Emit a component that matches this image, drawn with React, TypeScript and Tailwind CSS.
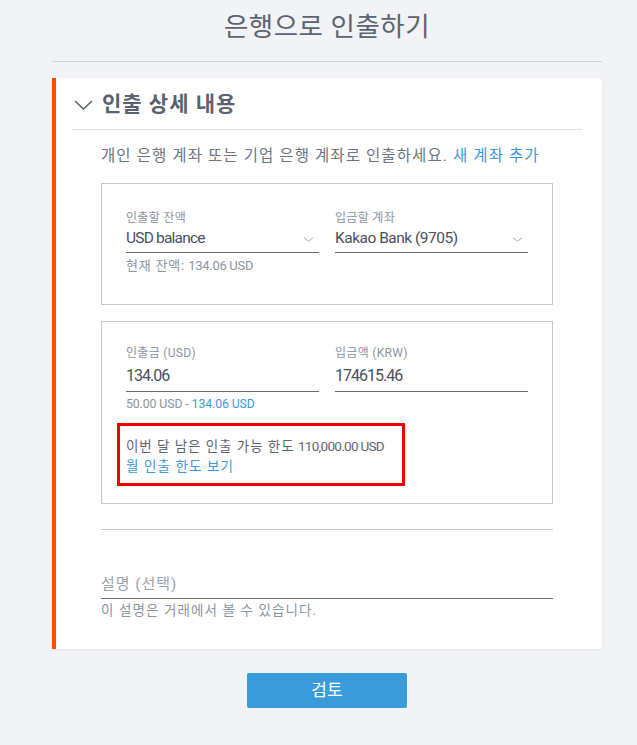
import React from "react";

const font = { fontFamily: "Roboto, 'Noto Sans CJK KR', sans-serif" };

function HeaderChevron() {
  return (
    <svg viewBox="0 0 19 10" className="h-[10px] w-[19px] text-[#5f6773]" fill="none" stroke="currentColor" strokeWidth="1.6">
      <path d="M1 1 L9.5 9 L18 1" />
    </svg>
  );
}

function SmallChevron() {
  return (
    <svg viewBox="0 0 11 5" className="h-[5px] w-[11px] text-[#a7adb6]" fill="none" stroke="currentColor" strokeWidth="1">
      <path d="M1 0.8 L5.5 4.2 L10 0.8" />
    </svg>
  );
}

function Label({ children }: { children: React.ReactNode }) {
  return <div className="h-4 text-[12px] leading-4 tracking-[0.3px] text-[#8c95a2]">{children}</div>;
}

function Input({ label, value }: { label: string; value: string }) {
  return (
    <div className="flex flex-col">
      <Label>{label}</Label>
      <div className="flex h-[31px] items-center border-b border-[#6a6f77]">
        <span className="text-[16px] tracking-[-1px] text-[#4a515c]">{value}</span>
      </div>
    </div>
  );
}

export default function App() {
  return (
    <div style={font} className="min-h-[745px] w-full bg-[#f1f3f7] pb-[37px]">
      <div className="ml-[52px] w-[550px]">
        <div className="flex h-[61px] items-center justify-center pb-[10px] pt-[2px] text-[26.5px] tracking-[0.5px] text-[#5c6470]">
          은행으로 인출하기
        </div>
        <div className="h-px bg-[#cfd2d8]" />
        <div className="mt-4 flex rounded-r-[3px] bg-white shadow-[0_1px_3px_rgba(0,0,0,0.08)]">
          <div className="w-1 shrink-0 bg-[#ff4a00]" />
          <div className="flex-1 pl-4 pr-5">
            <div className="flex h-[52px] items-center gap-[9px] border-b border-[#dfe2e7] pl-[2px] pt-[2px]">
              <HeaderChevron />
              <span className="text-[21px] font-bold tracking-[1px] text-[#5a6270]">인출 상세 내용</span>
            </div>
            <div className="px-[29px]">
              <div className="flex h-[53px] items-center pt-[1px] text-[15.5px] tracking-[1.1px] text-[#6d7581]">
                <span>
                  개인 은행 계좌 또는 기업 은행 계좌로 인출하세요.{" "}
                  <span className="text-[#3c9ad9]">새 계좌 추가</span>
                </span>
              </div>
              <div className="border border-[#c4c8cf] px-6 pb-[30px] pt-[26px]">
                <div className="grid grid-cols-2 gap-4">
                  <div className="flex flex-col">
                    <Label>인출할 잔액</Label>
                    <div className="flex h-[27px] items-center justify-between border-b border-[#6a6f77] pr-[5px]">
                      <span className="text-[15.5px] tracking-[-0.8px] text-[#4a515c]">USD balance</span>
                      <SmallChevron />
                    </div>
                    <div className="mt-[5px] h-4 text-[13px] leading-4 text-[#8c95a2]">
                      <span className="tracking-[0.8px]">현재 잔액:</span>{" "}
                      <span className="tracking-[-0.3px]">134.06 USD</span>
                    </div>
                  </div>
                  <div className="flex flex-col">
                    <Label>입금할 계좌</Label>
                    <div className="flex h-[27px] items-center justify-between border-b border-[#6a6f77] pr-[5px]">
                      <span className="text-[15.5px] tracking-[-0.5px] text-[#4a515c]">Kakao Bank (9705)</span>
                      <SmallChevron />
                    </div>
                  </div>
                </div>
              </div>
              <div className="mt-[16px] border border-[#c4c8cf] px-6 pb-[17px] pt-[23px]">
                <div className="grid grid-cols-2 gap-4">
                  <Input label="인출금 (USD)" value="134.06" />
                  <Input label="입금액 (KRW)" value="174615.46" />
                </div>
                <div className="mt-[4px] h-4 text-[12.3px] leading-4 tracking-[-0.1px] text-[#8c95a2]">
                  50.00 USD - <span className="text-[#3c9ad9]">134.06 USD</span>
                </div>
                <div className="ml-[-9px] mt-[11px] w-[288px] border-[3px] border-[#f00000] px-[6px] pb-[7px] pt-[10px]">
                  <div className="text-[13.5px] leading-5 text-[#5f6671]">
                    <span className="tracking-[0.95px]">이번 달 남은 인출 가능 한도</span>{" "}
                    <span className="tracking-[-0.7px]">110,000.00 USD</span>
                  </div>
                  <div className="text-[13.5px] leading-5 tracking-[1.1px] text-[#3c9ad9]">월 인출 한도 보기</div>
                </div>
              </div>
              <div className="mt-[25px] h-px bg-[#c4c8cf]" />
              <div className="mt-[41px] flex h-[28px] items-center border-b border-[#6a6f77] text-[15px] tracking-[1px] text-[#9aa2ad]">
                설명 (선택)
              </div>
              <div className="mt-[3px] h-4 text-[13.5px] leading-4 tracking-[1.1px] text-[#8c95a2]">
                이 설명은 거래에서 볼 수 있습니다.
              </div>
              <div className="h-[31px]" />
            </div>
          </div>
        </div>
        <div className="mt-[24px] flex justify-center">
          <button className="flex h-[35px] w-[160px] items-center justify-center rounded-[2px] bg-[#3a9bdb] text-[17px] text-white">
            검토
          </button>
        </div>
      </div>
    </div>
  );
}
